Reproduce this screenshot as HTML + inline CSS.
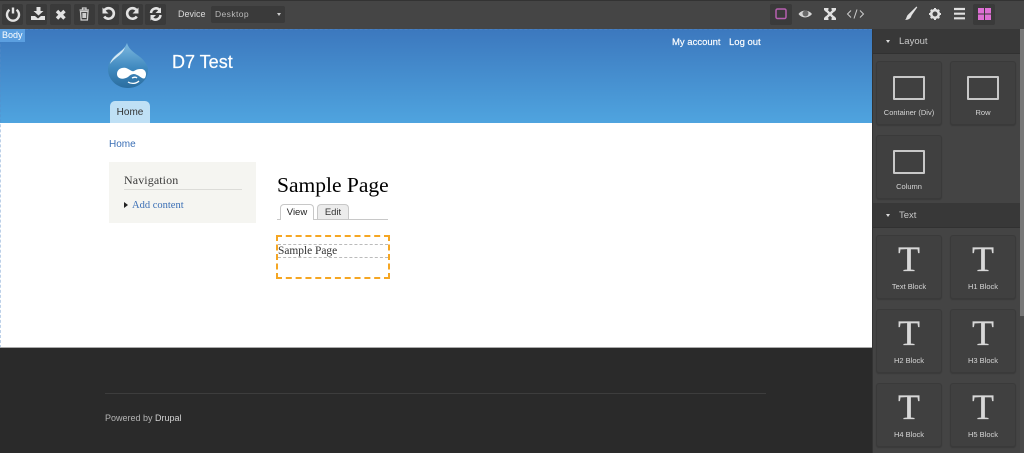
<!DOCTYPE html>
<html>
<head>
<meta charset="utf-8">
<style>
html,body{margin:0;padding:0;width:1024px;height:453px;overflow:hidden;background:#fff}
body{position:relative;font-family:"Liberation Sans",sans-serif;filter:blur(.3px)}
div,a,span{position:absolute;box-sizing:border-box;white-space:nowrap}
svg{position:absolute;overflow:visible}
.btn{top:4px;width:21px;height:21px;background:#3a3a3a;border-radius:2px}
.ser{font-family:"Liberation Serif",serif}
.card{width:66px;background:#404040;border:1px solid #3a3a3a;border-radius:3px;box-shadow:0 1px 1px #3a3a3a}
.rect{left:16px;top:14px;width:32px;height:24px;border:2px solid #c8c8c8;border-radius:1px}
.lab{left:0;width:100%;text-align:center;font-size:7.5px;color:#d6d6d6}
.T{left:0;width:100%;text-align:center;font-family:"Liberation Serif",serif;font-size:36px;line-height:36px;color:#d8d8d8;top:5px;-webkit-text-stroke:.3px #d8d8d8}
.hd{width:147px;height:25px;background:#383838;border-bottom:1px solid #313131;color:#c8c8c8;font-size:9.5px;line-height:26px}
</style>
</head>
<body>
<!-- toolbar -->
<div style="left:0;top:0;width:1024px;height:29px;background:#454545;border-top:1px solid #333"></div>
<div class="btn" style="left:2px"></div>
<div class="btn" style="left:26px"></div>
<div class="btn" style="left:50px"></div>
<div class="btn" style="left:74px"></div>
<div class="btn" style="left:98px"></div>
<div class="btn" style="left:122px"></div>
<div class="btn" style="left:145px"></div>
<svg style="left:0;top:0" width="170" height="29" fill="none" stroke="#e2e2e2" stroke-width="2.4">
<path d="M9.5 9.8a6 6 0 1 0 7 0M13 7.500v6"/>
<path d="M36.500 7h4v4h3l-5 4.500-5-4.500h3z" fill="#e2e2e2" stroke="none"/>
<path d="M31 16h4l3 2.500 3-2.500h4v4H31z" fill="#e2e2e2" stroke="none"/>
<path d="M57 11l7.500 7.500M64.500 11L57 18.500" stroke-width="3.400"/>
<path d="M80.500 11.500h7.500l-.6 8.500h-6.300zM79.500 10h9.500M82.500 9.500V8h3.500v1.500M83 13v5M84.300 13v5M85.600 13v5" stroke-width="1.300" stroke="#cfcfcf"/>
<path d="M104.500 10a5.300 5.300 0 1 1-.3 6.500" stroke-width="2.600"/>
<path d="M102.500 7.500v6h6z" fill="#e2e2e2" stroke="none"/>
<path d="M136.500 10a5.300 5.300 0 1 0 .3 6.500" stroke-width="2.600"/>
<path d="M138.500 7.500v6h-6z" fill="#e2e2e2" stroke="none"/>
<path d="M151 13a5 5 0 0 1 8.500-3.200M160.500 15a5 5 0 0 1-8.500 3.200" stroke-width="2.500"/>
<path d="M161 7.500V13h-5.500zM150.500 20.500V15h5.500z" fill="#e2e2e2" stroke="none"/>
</svg>
<div style="left:178px;top:9px;font-size:9px;color:#dcdcdc">Device</div>
<div style="left:211px;top:6px;width:74px;height:17px;background:#3a3a3a;border-radius:2px;color:#bbb;font-size:8.5px;line-height:17px;padding-left:4px;letter-spacing:.4px">Desktop</div>
<div style="left:277px;top:13px;width:0;height:0;border-left:2.500px solid transparent;border-right:2.500px solid transparent;border-top:3px solid #ccc"></div>

<div class="btn" style="left:770px;width:22px"></div>
<div class="btn" style="left:973px;width:22px"></div>
<svg style="left:765px;top:0" width="259" height="29" fill="none" stroke="#e0e0e0">
<rect x="11" y="9" width="10" height="9.500" rx="1.500" stroke="#b65fb0" stroke-width="1.500"/>
<path d="M33.500 14c3-4.500 10-4.500 13.500 0c-3.500 4.500-10.500 4.500-13.500 0z" fill="#d6d6d6" stroke="none"/>
<circle cx="40.500" cy="13.500" r="3" fill="#6a6a6a" stroke="none"/>
<path d="M60 9l10 10M70 9L60 19" stroke-width="2.400"/>
<path d="M59 8h4.500v1.500L61 12l-2-2zM71 8h-4.500v1.500L69 12l2-2zM59 20h4.500v-1.500L61 16l-2 2zM71 20h-4.500v-1.500L69 16l2 2z" fill="#e0e0e0" stroke="none"/>
<path d="M86 10.500L82.500 14l3.500 3.500M95 10.500l3.500 3.500-3.500 3.500M92 9.500l-3 9" stroke-width="1" stroke="#ccc"/>
<path d="M151.500 6.500l.8.800-5.500 7.800c-.8 1.700-1 4.500-6.800 4.900 1.700-1.200 1.300-4 3.200-5.500z" fill="#e2e2e2" stroke="none"/>
<circle cx="170" cy="14" r="3.800" stroke-width="2.600"/>
<path d="M170 8v2M170 18v2M164 14h2M174 14h2M165.800 9.800l1.400 1.400M172.800 16.800l1.400 1.400M174.200 9.800l-1.400 1.400M167.200 16.800l-1.400 1.400" stroke-width="2"/>
<path d="M189 9h11M189 13.700h11M189 18.300h11" stroke-width="2.200"/>
<rect x="213" y="8" width="6" height="5.500" fill="#dd6fd3" stroke="none"/>
<rect x="220" y="8" width="6" height="5.500" fill="#dd6fd3" stroke="none"/>
<rect x="213" y="14.500" width="6" height="5.500" fill="#dd6fd3" stroke="none"/>
<rect x="220" y="14.500" width="6" height="5.500" fill="#dd6fd3" stroke="none"/>
</svg>

<!-- page -->
<div style="left:0;top:29px;width:872px;height:94px;background:linear-gradient(#3c78be,#4fa4df)"></div>
<div style="left:0;top:29px;width:872px;height:319px;border:1px dashed rgba(90,140,200,.4);border-bottom:0;border-right:0"></div>
<div style="left:0;top:29px;width:25px;height:13px;background:#5b9fe0;color:#fff;font-size:9px;line-height:13px;padding-left:2px">Body</div>

<svg style="left:107px;top:42px" width="44" height="48">
<defs><linearGradient id="dg" x1="0" y1="0" x2="0" y2="1"><stop offset="0" stop-color="#7db9e0"/><stop offset=".55" stop-color="#4089bf"/><stop offset="1" stop-color="#2a6d9f"/></linearGradient></defs>
<path d="M20 1C22 8 28 11 33 15C38 19 41 24 41 28C41 38 32 46 21 46C10 46 1 38 1 27C1 20 6 15 11 11C15 8 18 6 20 1z" fill="url(#dg)"/>
<path d="M18 5C15 10 5 14 3 22C8 15 16 13 18 5z" fill="#d6e9f5"/>
<path d="M10 32C10 27 15 25 19 26C22 27 25 30 27 29C30 27 32 27 35 27C39 28 40 32 38 36C36 38 33 34 30 33C27 31 24 32 21 35C16 38 10 37 10 32z" fill="#fff"/>
<path d="M21 40C24 42 29 42 32 39M25 36C27 35 29 35 30 36" stroke="#fff" stroke-width="1.300" fill="none"/>
</svg>
<div style="left:172px;top:50px;font-size:18px;line-height:24px;color:#fff;-webkit-text-stroke:.2px #fff">D7 Test</div>
<div style="left:672px;top:37px;font-size:9.5px;line-height:12px;color:#fff;-webkit-text-stroke:.15px #fff">My account</div>
<div style="left:729px;top:37px;font-size:9.5px;line-height:12px;color:#fff;-webkit-text-stroke:.15px #fff">Log out</div>
<div style="left:110px;top:101px;width:40px;height:22px;background:#bfe0f5;border-radius:5px 5px 0 0;text-align:center;font-size:10px;line-height:22px;padding-top:1px;color:#333">Home</div>

<div style="left:109px;top:138px;font-size:10px;line-height:13px;padding-top:0;color:#3b6fb5">Home</div>
<div style="left:109px;top:162px;width:147px;height:61px;background:#f5f5f1"></div>
<div class="ser" style="left:124px;top:173px;font-size:12px;line-height:15px;color:#3b3b3b;letter-spacing:.1px">Navigation</div>
<div style="left:124px;top:189px;width:118px;height:1px;background:#dcdcd8"></div>
<div style="left:124px;top:202px;width:0;height:0;border-left:4px solid #222;border-top:3px solid transparent;border-bottom:3px solid transparent"></div>
<div class="ser" style="left:132px;top:199px;font-size:10.5px;line-height:13px;color:#3b6fb5">Add content</div>

<div class="ser" style="left:277px;top:172px;font-size:21.5px;line-height:26px;color:#000">Sample Page</div>
<div style="left:277px;top:219px;width:111px;height:1px;background:#c8c8c8"></div>
<div style="left:280px;top:204px;width:34px;height:16px;background:#fff;border:1px solid #c8c8c8;border-bottom:0;border-radius:4px 4px 0 0;text-align:center;font-size:9.5px;line-height:16px;color:#222">View</div>
<div style="left:317px;top:204px;width:32px;height:15px;background:#ececec;border:1px solid #c8c8c8;border-bottom:0;border-radius:4px 4px 0 0;text-align:center;font-size:9.5px;line-height:15px;color:#333">Edit</div>
<div style="left:276px;top:235px;width:114px;height:44px;border:2px dashed #f5a623"></div>
<div style="left:278px;top:244px;width:110px;height:14px;border:1px dashed #bbb;border-left:0;border-right:0"></div>
<div class="ser" style="left:278px;top:244px;font-size:11.4px;line-height:14px;color:#333">Sample Page</div>

<!-- footer -->
<div style="left:0;top:347px;width:872px;height:106px;background:#2a2a2a;border-top:1px solid #aaa"></div>
<div style="left:105px;top:393px;width:661px;height:1px;background:#3d3d3d"></div>
<div style="left:105px;top:412px;font-size:9px;line-height:12px;color:#b4b4b4">Powered by <span style="position:static;color:#d4d4d4">Drupal</span></div>

<!-- panel -->
<div style="left:872px;top:29px;width:152px;height:424px;background:#444;border-left:1px solid #333"></div>
<div style="left:1020px;top:29px;width:4px;height:424px;background:#4a4a4a"></div>
<div style="left:1020px;top:29px;width:4px;height:287px;background:#777"></div>
<div class="hd" style="left:873px;top:29px;padding-left:26px">Layout</div>
<div style="left:886px;top:40px;width:0;height:0;border-left:2.500px solid transparent;border-right:2.500px solid transparent;border-top:3px solid #ddd"></div>
<div class="hd" style="left:873px;top:203px;padding-left:26px">Text</div>
<div style="left:886px;top:214px;width:0;height:0;border-left:2.500px solid transparent;border-right:2.500px solid transparent;border-top:3px solid #ddd"></div>

<div class="card" style="left:876px;top:61px;height:64px"><div class="rect"></div><div class="lab" style="top:46px">Container (Div)</div></div>
<div class="card" style="left:950px;top:61px;height:64px"><div class="rect"></div><div class="lab" style="top:46px">Row</div></div>
<div class="card" style="left:876px;top:135px;height:64px"><div class="rect"></div><div class="lab" style="top:46px">Column</div></div>

<div class="card" style="left:876px;top:235px;height:64px"><div class="T">T</div><div class="lab" style="top:46px">Text Block</div></div>
<div class="card" style="left:950px;top:235px;height:64px"><div class="T">T</div><div class="lab" style="top:46px">H1 Block</div></div>
<div class="card" style="left:876px;top:309px;height:64px"><div class="T">T</div><div class="lab" style="top:46px">H2 Block</div></div>
<div class="card" style="left:950px;top:309px;height:64px"><div class="T">T</div><div class="lab" style="top:46px">H3 Block</div></div>
<div class="card" style="left:876px;top:383px;height:64px"><div class="T">T</div><div class="lab" style="top:46px">H4 Block</div></div>
<div class="card" style="left:950px;top:383px;height:64px"><div class="T">T</div><div class="lab" style="top:46px">H5 Block</div></div>
</body>
</html>
